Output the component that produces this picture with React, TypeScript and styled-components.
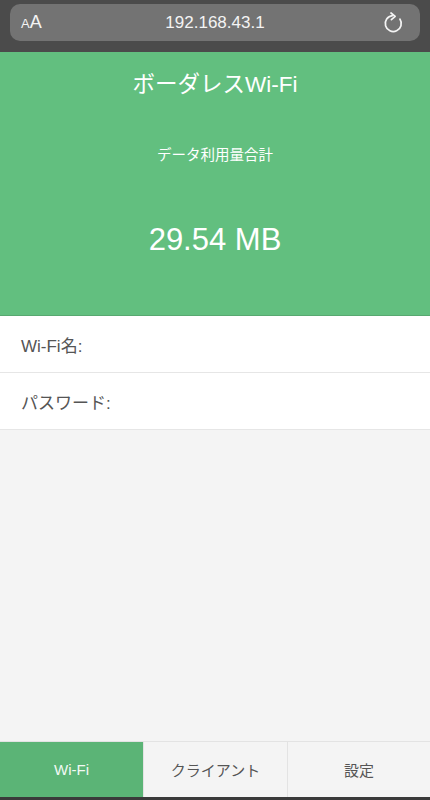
import React from 'react';
import styled, { createGlobalStyle } from 'styled-components';

const GlobalStyle = createGlobalStyle`
  html, body {
    margin: 0;
    padding: 0;
    background: #f4f4f4;
    font-family: "Liberation Sans", "Noto Sans CJK JP", sans-serif;
  }
  * { box-sizing: border-box; }
`;

const Page = styled.div`
  display: flex;
  flex-direction: column;
  width: 430px;
  height: 800px;
  background: #f4f4f4;
`;

const BrowserBar = styled.div`
  height: 52px;
  background: #4b4b4b;
  padding: 4px 10px 11px;
`;

const AddressPill = styled.div`
  height: 37px;
  border-radius: 10px;
  background: #737373;
  display: flex;
  align-items: center;
  justify-content: space-between;
  padding: 0 11px 0 11px;
  color: #f4f4f4;
`;

const TextSize = styled.span`
  font-family: "Liberation Sans", sans-serif;
  display: flex;
  align-items: baseline;
  width: 30px;
  small { font-size: 13px; }
  span { font-size: 18px; }
`;

const Url = styled.span`
  font-size: 17px;
  font-family: "Liberation Sans", sans-serif;
`;

const Reload = styled.svg`
  width: 30px;
  display: block;
`;

const Header = styled.header`
  height: 264px;
  background: #62bf7f;
  border-bottom: 1px solid #58a870;
  display: flex;
  flex-direction: column;
  align-items: center;
  color: #fff;
`;

const Title = styled.h1`
  margin: 17px 0 0;
  font-size: 22.5px;
  font-weight: 400;
  line-height: 32px;
`;

const Caption = styled.div`
  margin-top: 44px;
  font-size: 14.5px;
  line-height: 20px;
`;

const Amount = styled.div`
  margin-top: 57px;
  font-size: 31px;
  line-height: 36px;
`;

const Row = styled.div`
  height: 57px;
  background: #fff;
  border-bottom: 1px solid #e6e6e6;
  display: flex;
  align-items: center;
  padding-left: 21px;
  font-size: 17px;
  color: #555;
`;

const Filler = styled.div`
  flex: 1;
`;

const TabBar = styled.nav`
  height: 56px;
  display: grid;
  grid-template-columns: 143px 144px 143px;
  border-top: 1px solid #e3e3e3;
  background: #f4f4f4;
`;

const Tab = styled.div<{ $active?: boolean }>`
  display: flex;
  align-items: center;
  justify-content: center;
  font-size: 15px;
  color: ${p => (p.$active ? '#f2f9f4' : '#555')};
  background: ${p => (p.$active ? '#5bb476' : '#f4f4f4')};
  border-left: ${p => (p.$active ? 'none' : '1px solid #e3e3e3')};
`;

const BottomEdge = styled.div`
  height: 3px;
  background: #3a3a3a;
`;

export default function App() {
  return (
    <>
      <GlobalStyle />
      <Page>
        <BrowserBar>
          <AddressPill>
            <TextSize>
              <small>A</small>
              <span>A</span>
            </TextSize>
            <Url>192.168.43.1</Url>
            <Reload viewBox="0 0 30 30" height="30">
              <path
                d="M19.2 9.3 A8 8 0 1 1 11 8.6"
                fill="none"
                stroke="#f4f4f4"
                strokeWidth="1.7"
                strokeLinecap="round"
                transform="translate(15 15) rotate(20) translate(-15 -15)"
              />
              <path
                d="M12 5 L16.2 8.3 L12.4 11.6"
                fill="none"
                stroke="#f4f4f4"
                strokeWidth="1.7"
                strokeLinecap="round"
                strokeLinejoin="round"
              />
            </Reload>
          </AddressPill>
        </BrowserBar>
        <Header>
          <Title>ボーダレスWi-Fi</Title>
          <Caption>データ利用量合計</Caption>
          <Amount>29.54 MB</Amount>
        </Header>
        <Row>Wi-Fi名:</Row>
        <Row>パスワード:</Row>
        <Filler />
        <TabBar>
          <Tab $active>Wi-Fi</Tab>
          <Tab>クライアント</Tab>
          <Tab>設定</Tab>
        </TabBar>
        <BottomEdge />
      </Page>
    </>
  );
}
